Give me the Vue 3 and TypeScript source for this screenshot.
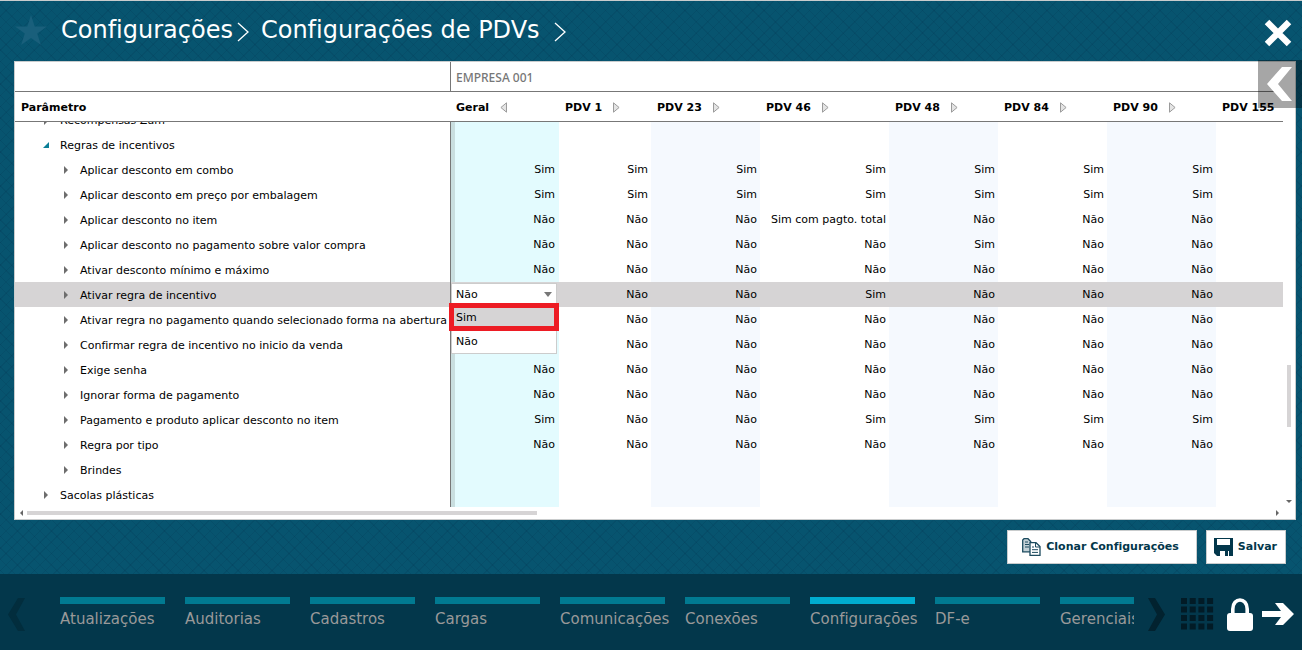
<script setup lang="ts">
import { ref } from 'vue'

interface Row {
  label: string
  level: number
  open?: boolean
  values?: string[]
  selected?: boolean
  cut?: boolean
}

const columns = ['Geral', 'PDV 1', 'PDV 23', 'PDV 46', 'PDV 48', 'PDV 84', 'PDV 90', 'PDV 155']
const S = 'Sim'
const N = 'Não'
const rows: Row[] = [
  { label: 'Recompensas Zum', level: 0, cut: true },
  { label: 'Regras de incentivos', level: 0, open: true },
  { label: 'Aplicar desconto em combo', level: 1, values: [S, S, S, S, S, S, S] },
  { label: 'Aplicar desconto em preço por embalagem', level: 1, values: [S, S, S, S, S, S, S] },
  { label: 'Aplicar desconto no item', level: 1, values: [N, N, N, 'Sim com pagto. total', N, N, N] },
  { label: 'Aplicar desconto no pagamento sobre valor compra', level: 1, values: [N, N, N, N, S, N, N] },
  { label: 'Ativar desconto mínimo e máximo', level: 1, values: [N, N, N, N, N, N, N] },
  { label: 'Ativar regra de incentivo', level: 1, values: ['', N, N, S, N, N, N], selected: true },
  { label: 'Ativar regra no pagamento quando selecionado forma na abertura', level: 1, values: ['', N, N, N, N, N, N] },
  { label: 'Confirmar regra de incentivo no inicio da venda', level: 1, values: ['', N, N, N, N, N, N] },
  { label: 'Exige senha', level: 1, values: [N, N, N, N, N, N, N] },
  { label: 'Ignorar forma de pagamento', level: 1, values: [N, N, N, N, N, N, N] },
  { label: 'Pagamento e produto aplicar desconto no item', level: 1, values: [S, N, N, S, S, S, S] },
  { label: 'Regra por tipo', level: 1, values: [N, N, N, N, N, N, N] },
  { label: 'Brindes', level: 1 },
  { label: 'Sacolas plásticas', level: 0 },
]

const choice = ref(N)
const menu = ['Atualizações', 'Auditorias', 'Cadastros', 'Cargas', 'Comunicações', 'Conexões', 'Configurações', 'DF-e', 'Gerenciais']
const active = ref('Configurações')
</script>

<template>
  <div class="app">
    <header class="top">
      <button class="icon star" aria-label="Favorito">
        <svg width="32" height="32" viewBox="0 0 32 32"><path d="M16 0l3.700 11.500H32l-9.800 7.100L25.900 30 16 23 6.100 30l3.700-11.400L0 11.500h12.300z" fill="#195f7b" /></svg>
      </button>
      <nav class="crumbs">
        <a href="#">Configurações</a>
        <svg class="sep first" width="12" height="22" viewBox="0 0 12 22"><path d="M1 2l10 9-10 9" fill="none" stroke="#fff" stroke-width="1.300" /></svg>
        <a href="#">Configurações de PDVs</a>
        <svg class="sep last" width="12" height="22" viewBox="0 0 12 22"><path d="M1 2l10 9-10 9" fill="none" stroke="#fff" stroke-width="1.300" /></svg>
      </nav>
      <button class="icon close" aria-label="Fechar">
        <svg width="28" height="28" viewBox="0 0 28 28"><path d="M3 3l22 22M25 3L3 25" stroke="#fff" stroke-width="6.4" /></svg>
      </button>
    </header>

    <main class="panel">
      <button class="drawer" aria-label="Abrir painel lateral">
        <svg width="26" height="34" viewBox="0 0 26 34"><path d="M15 0h10L11 17l14 17H15L0 17z" fill="#fff" /></svg>
      </button>
      <div class="view">
        <table>
          <colgroup>
            <col class="c-name" /><col class="c-std" /><col class="c-small" /><col class="c-std" /><col class="c-wide" />
            <col class="c-std" /><col class="c-std" /><col class="c-std" /><col />
          </colgroup>
          <thead>
            <tr class="company">
              <th></th>
              <th colspan="8" scope="colgroup">EMPRESA 001</th>
            </tr>
            <tr class="names">
              <th scope="col">Parâmetro</th>
              <th v-for="(c, i) in columns" :key="c" scope="col">
                <span class="head">{{ c }}
                  <svg v-if="i < 7" :class="{ flip: i === 0 }" width="7" height="11" viewBox="0 0 7 11"><path d="M.5.8l5.6 4.7-5.6 4.7z" fill="#e4e4e4" stroke="#9b9b9b" /></svg>
                </span>
              </th>
            </tr>
          </thead>
          <tbody>
            <tr v-for="r in rows" :key="r.label" :class="{ selected: r.selected, cut: r.cut }">
              <th scope="row">
                <div class="node" :class="'level-' + r.level">
                  <svg width="6" height="8" viewBox="0 0 6 8">
                    <path v-if="r.open" d="M6 1v6H0z" fill="#0b7f97" />
                    <path v-else d="M1 0l4 4-4 4z" fill="#6d6d6d" />
                  </svg>
                  <span>{{ r.label }}</span>
                </div>
              </th>
              <td v-for="(c, i) in columns" :key="c" :class="{ general: i === 0, tint: i === 2 || i === 4 || i === 6 }">
                <div v-if="r.selected && i === 0" class="combo">
                  <select v-model="choice" aria-label="Ativar regra de incentivo">
                    <option>Não</option>
                    <option>Sim</option>
                  </select>
                  <svg class="caret" width="8" height="5" viewBox="0 0 8 5"><path d="M0 0h8L4 5z" fill="#777" /></svg>
                  <div class="options">
                    <button class="marked" @click="choice = S">Sim</button>
                    <button @click="choice = N">Não</button>
                  </div>
                </div>
                <template v-else>{{ r.values?.[i] }}</template>
              </td>
            </tr>
          </tbody>
        </table>
      </div>
      <div class="vbar">
        <span class="space-a"></span><span class="thumb"></span><span class="space-b"></span>
        <svg width="6" height="3" viewBox="0 0 6 3"><path d="M0 0h6L3 3z" fill="#666" /></svg>
      </div>
      <div class="hbar">
        <svg width="3" height="6" viewBox="0 0 3 6"><path d="M3 0v6L0 3z" fill="#666" /></svg>
        <span class="track"><span class="thumb"></span></span>
        <svg width="3" height="6" viewBox="0 0 3 6"><path d="M0 0v6l3-3z" fill="#666" /></svg>
      </div>
    </main>

    <div class="actions">
      <button class="clone">
        <svg width="19" height="18" viewBox="0 0 19 18" fill="#fff" stroke="#1d4b5f">
          <path d="M.7 2v11.800h8V3.500L6 .7H2z" fill="#c3d0d6" stroke-width="1.300" />
          <path d="M3 4h3M3 6.500h4M3 9h4" stroke-width="1" />
          <path d="M8 4.700h6l4 3.800v8.800H8z" stroke-width="1.300" />
          <path d="M13.500 5v4H18M10 9h2M10 11.700h6M10 14.400h6" fill="none" stroke-width="1" />
        </svg>
        Clonar Configurações
      </button>
      <button class="save">
        <svg width="19" height="18" viewBox="0 0 19 18"><path d="M0 0h19v18H3l-3-3z" fill="#03374b" /><path d="M3 1h13v6H3zM6 12h9v6H6z" fill="#fff" /><path d="M6 11h9v2H6zM11 13h3v5h-3z" fill="#03374b" /></svg>
        Salvar
      </button>
    </div>

    <footer class="bottom">
      <button class="icon prev" aria-label="Anterior">
        <svg width="18" height="33" viewBox="0 0 18 33"><path d="M10 0h7L8 16.500 17 33h-7L0 16.500z" fill="#022d3d" /></svg>
      </button>
      <nav class="menu">
        <a v-for="m in menu" :key="m" href="#" :class="{ active: m === active }" @click.prevent="active = m">{{ m }}</a>
      </nav>
      <button class="icon next" aria-label="Próximo">
        <svg width="18" height="33" viewBox="0 0 18 33"><path d="M8 0H1l9 16.500L1 33h7l10-16.500z" fill="#02222f" /></svg>
      </button>
      <button class="icon grid" aria-label="Aplicativos">
        <svg width="33" height="32" viewBox="0 0 33 32" fill="#021b26">
          <template v-for="y in 4" :key="y">
            <rect v-for="x in 4" :key="x" :x="(x - 1) * 8.700" :y="(y - 1) * 8.500" width="6" height="6" />
          </template>
        </svg>
      </button>
      <button class="icon lock" aria-label="Bloquear">
        <svg width="26" height="33" viewBox="0 0 26 33"><rect y="15" width="26" height="18" rx="3" fill="#fff" /><path d="M5.800 17v-6c0-12 14.400-12 14.400 0v6" fill="none" stroke="#fff" stroke-width="3.600" /></svg>
      </button>
      <button class="icon" aria-label="Sair">
        <svg width="32" height="22" viewBox="0 0 32 22"><path d="M0 8h19L13 0h8l11 11-11 11h-8l6-8H0z" fill="#fff" /></svg>
      </button>
    </footer>
  </div>
</template>

<style>
body {
  margin: 0;
}
</style>

<style scoped>
.app {
  display: flex;
  flex-direction: column;
  min-height: 100vh;
  box-sizing: border-box;
  border-top: 1px solid #c9cccd;
  font: 11px/16px Verdana, 'DejaVu Sans', sans-serif;
  font-variant-ligatures: none;
  color: #000;
  background-color: #07546f;
  background-image: repeating-linear-gradient(45deg, rgba(0, 20, 50, 0.09) 0 1px, transparent 1px 8px),
    repeating-linear-gradient(-45deg, rgba(0, 20, 50, 0.09) 0 1px, transparent 1px 8px);
}
button,
select {
  font: inherit;
  color: inherit;
  border: 0;
  border-radius: 0;
  padding: 0;
  background: none;
}
.icon {
  display: flex;
  flex: none;
}
.top {
  display: flex;
  align-items: center;
  height: 60px;
  padding: 0 10px 0 15px;
}
.close {
  margin-top: 4px;
}
.crumbs {
  display: flex;
  flex: 1;
  align-items: center;
  margin-left: 14px;
  padding-bottom: 2px;
  font-size: 24px;
  line-height: 32px;
}
.crumbs a {
  color: #fff;
  text-decoration: none;
}
.sep {
  margin-top: 4px;
}
.first {
  margin-left: 4px;
  margin-right: 12px;
}
.last {
  margin-left: 14px;
}
.panel {
  position: relative;
  display: grid;
  grid-template-columns: 1fr 12px;
  grid-template-rows: auto 12px;
  margin: 0 6px 0 14px;
  border: 1px solid #c9cccd;
  background: #fff;
}
.drawer {
  position: absolute;
  top: -2px;
  right: -7px;
  display: flex;
  align-items: center;
  justify-content: center;
  width: 44px;
  height: 48px;
  background: rgba(0, 0, 0, 0.35);
}
.view {
  min-width: 0;
  overflow: hidden;
}
table {
  width: 100%;
  table-layout: fixed;
  border-collapse: separate;
  border-spacing: 0;
}
.c-name {
  width: 435px;
}
.c-std {
  width: 109px;
}
.c-small {
  width: 92px;
}
.c-wide {
  width: 129px;
}
th,
td {
  box-sizing: border-box;
  height: 25px;
  padding: 0;
  font-weight: normal;
  text-align: left;
  white-space: nowrap;
}
thead th {
  height: 30px;
  padding: 2px 0 0 6px;
  border-bottom: 1px solid #777;
}
.company th + th {
  padding-left: 5px;
  border-left: 1px solid #777;
  color: #777;
  font: 500 12px/16px 'Noto Sans', sans-serif;
}
.names th {
  font-weight: bold;
}
.head {
  display: flex;
  align-items: center;
  gap: 11px;
}
.flip {
  transform: scaleX(-1);
}
.node {
  display: flex;
  align-items: center;
  gap: 11px;
  padding-left: 28px;
}
.node.level-1 {
  padding-left: 48px;
}
.node span {
  padding-top: 2px;
}
.cut th,
.cut td {
  height: 10px;
}
.cut .node {
  height: 10px;
  box-sizing: border-box;
  align-items: flex-end;
  padding-bottom: 3px;
  overflow: hidden;
}
.cut svg {
  margin-bottom: 4px;
}
tbody td {
  padding: 1px 3px 0 0;
  text-align: right;
}
.tint {
  background: #f5f9fe;
}
.general {
  position: relative;
  padding-right: 4px;
  border-left: 1px solid #777;
  background: linear-gradient(to right, #c9dedf 4px, #e3fbfe 4px);
}
.selected th,
.selected td {
  background: #d6d4d5;
}
.combo {
  position: absolute;
  top: 1px;
  left: 0;
  right: 2px;
}
.combo select {
  display: block;
  width: 100%;
  height: 22px;
  box-sizing: border-box;
  padding: 1px 0 0 4px;
  border: 1px solid #ccc;
  appearance: none;
  background: #fff;
}
.caret {
  position: absolute;
  top: 9px;
  right: 5px;
}
.options {
  position: relative;
  z-index: 1;
  border: 1px solid #ccc;
  border-top: 0;
  background: #fff;
}
.options button {
  display: block;
  width: 100%;
  height: 24px;
  padding: 2px 0 0 4px;
  text-align: left;
}
.options .marked {
  position: relative;
  background: #d6d4d5;
}
.marked::after {
  content: '';
  position: absolute;
  inset: -2px -3px;
  border: 5px solid #ed1c24;
}
.vbar {
  display: flex;
  flex-direction: column;
  align-items: center;
  padding-bottom: 4px;
}
.vbar .thumb {
  width: 4px;
  height: 62px;
  background: #d6d4d5;
}
.space-a {
  flex: 303;
}
.space-b {
  flex: 73;
}
.hbar {
  display: flex;
  align-items: center;
  gap: 4px;
  padding: 0 4px 0 5px;
}
.track {
  flex: 1;
}
.track .thumb {
  display: block;
  width: 41%;
  height: 4px;
  background: #d6d4d5;
}
.actions {
  display: flex;
  flex: 1;
  justify-content: flex-end;
  align-items: flex-start;
  gap: 9px;
  padding: 10px 16px;
}
.actions button {
  display: flex;
  align-items: center;
  gap: 5px;
  height: 34px;
  border: 1px solid #c9cccd;
  background: #fff;
  color: #03374b;
  font-weight: bold;
}
.actions .clone {
  padding: 0 17px 0 14px;
}
.actions .save {
  padding: 0 8px 0 7px;
}
.bottom {
  display: flex;
  align-items: center;
  box-sizing: border-box;
  height: 76px;
  padding: 4px 8px 0;
  background: #03374b;
}
.menu {
  display: flex;
  flex: 1;
  gap: 20px;
  min-width: 0;
  margin-left: 34px;
  overflow: hidden;
}
.menu a {
  flex: none;
  width: 105px;
  border-top: 7px solid #017a91;
  padding: 5px 0 2px;
  color: #999;
  font-size: 15px;
  line-height: 20px;
  text-decoration: none;
}
.menu .active {
  border-color: #00accf;
}
.next {
  margin-left: 13px;
}
.grid {
  margin-left: 16px;
}
.lock {
  margin: 0 9px 0 13px;
}
</style>
